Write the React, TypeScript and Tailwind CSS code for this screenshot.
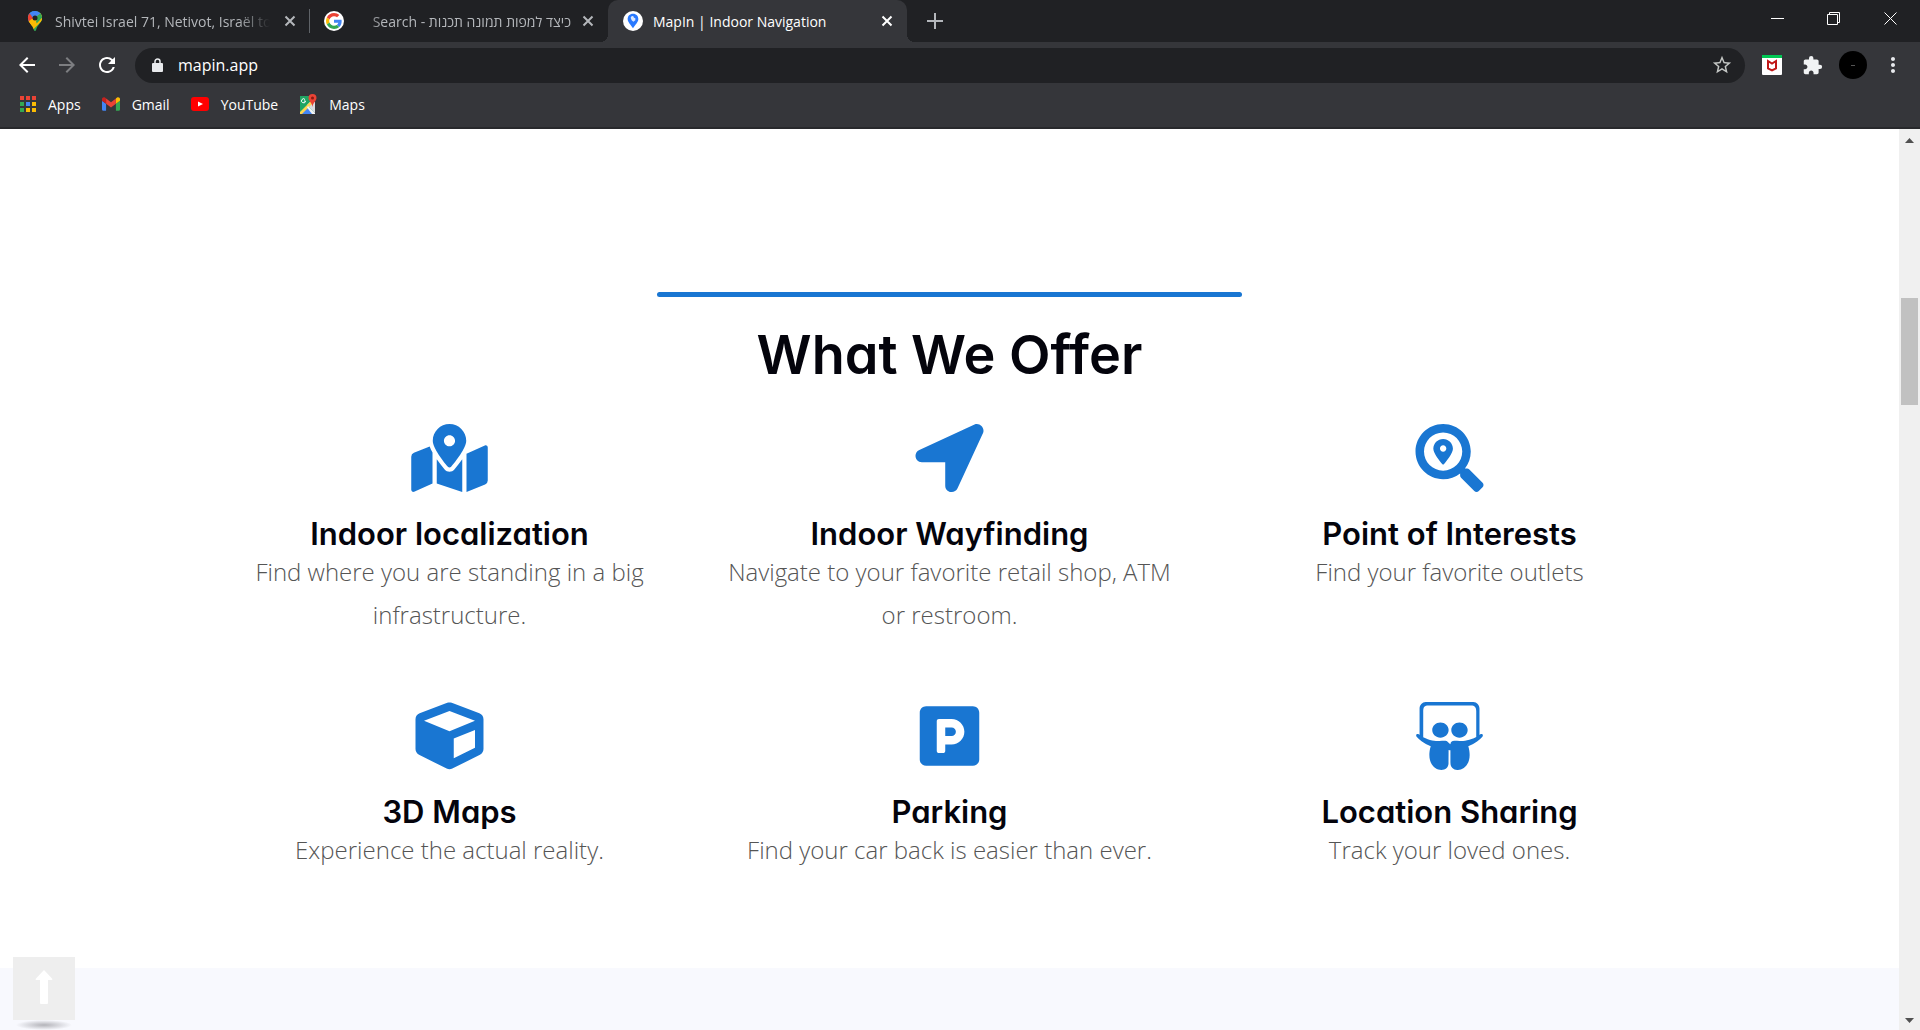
import type { ReactNode } from "react";
import {
  FaCube,
  FaLocationArrow,
  FaMapMarkedAlt,
  FaParking,
  FaSearchLocation,
  FaSlideshare,
} from "react-icons/fa";
import {
  MdArrowBack,
  MdArrowForward,
  MdExtension,
  MdMoreVert,
  MdRefresh,
  MdStarBorder,
} from "react-icons/md";

const PIN = "M12 0C7 0 3.5 3.7 3.5 8.300c0 5.700 5.800 8.200 7.200 14.400.3 1.600 2.300 1.600 2.600 0 1.400-6.200 7.200-8.700 7.200-14.400C20.500 3.700 17 0 12 0z";

function MapsPin() {
  return (
    <svg viewBox="0 0 24 24" className="size-5 shrink-0" aria-hidden="true">
      <clipPath id="pin-clip">
        <path d={PIN} />
      </clipPath>
      <g clipPath="url(#pin-clip)">
        <rect width="24" height="24" fill="#34a853" />
        <path d="M0 20 12 8 24 -4 V8 L8 24z" fill="#fbbc04" />
        <path d="M12 8 24 -3 V5 L20.500 8 14 15z" fill="#34a853" />
        <path d="M0 16 L14 2 V-2 H0z" fill="#1a73e8" />
        <path d="M0 8 L5 2.500 12 9 3 18z" fill="#ea4335" />
        <path d="M5.500 2.500 L9 -1 H24 L10 9z" fill="#4285f4" />
        <path d="M2 14 L9 9 14 11 9 18z" fill="#fbbc04" />
      </g>
      <circle cx="12" cy="8.300" r="3" fill="#202124" />
    </svg>
  );
}

function GoogleMark() {
  return (
    <span className="flex size-5 shrink-0 items-center justify-center rounded-full bg-white">
      <svg viewBox="0 0 48 48" className="size-4" aria-hidden="true">
        <path fill="#EA4335" d="M24 9.500c3.540 0 6.710 1.220 9.210 3.600l6.850-6.850C35.900 2.380 30.470 0 24 0 14.620 0 6.510 5.380 2.560 13.220l7.980 6.190C12.430 13.720 17.740 9.500 24 9.500z" />
        <path fill="#4285F4" d="M46.980 24.550c0-1.570-.15-3.090-.38-4.550H24v9.020h12.940c-.58 2.960-2.260 5.480-4.780 7.180l7.730 6c4.510-4.180 7.090-10.360 7.090-17.650z" />
        <path fill="#FBBC05" d="M10.530 28.590c-.48-1.450-.76-2.990-.76-4.590s.27-3.140.76-4.590l-7.980-6.190C.92 16.460 0 20.120 0 24c0 3.880.92 7.540 2.560 10.780l7.970-6.190z" />
        <path fill="#34A853" d="M24 48c6.480 0 11.930-2.130 15.890-5.810l-7.730-6c-2.150 1.450-4.920 2.300-8.160 2.300-6.260 0-11.570-4.220-13.470-9.910l-7.980 6.190C6.510 42.620 14.620 48 24 48z" />
      </svg>
    </span>
  );
}

function MapInMark() {
  return (
    <span className="flex size-5 shrink-0 items-center justify-center rounded-full bg-white">
      <svg viewBox="0 0 24 24" className="size-4" aria-hidden="true">
        <path d="M12 1C7 1 4 4.600 4 9c0 5 4.500 8 8 14 3.500-6 8-9 8-14 0-4.400-3-8-8-8z" fill="#2979ff" />
        <path d="M8.500 7a3 3 0 0 1 4-2l1 2 2 1v3l-3 2-2.500-2z" fill="#dbe8ff" />
      </svg>
    </span>
  );
}

function CloseGlyph() {
  return (
    <svg viewBox="0 0 12 12" className="size-3" aria-hidden="true">
      <path d="M1.500 1.500l9 9M10.500 1.500l-9 9" stroke="currentColor" strokeWidth="2" />
    </svg>
  );
}

function TabClose({ title }: { title: string }) {
  return (
    <button type="button" aria-label={`Close ${title}`} className="flex size-5 shrink-0 items-center justify-center">
      <CloseGlyph />
    </button>
  );
}

function TabStrip() {
  return (
    <div className="flex h-[42px] bg-[#202124] text-[14px] text-[#b4b7bb]">
      <div className="flex w-[309px] items-center gap-[10px] pr-[9px] pl-[25px]">
        <MapsPin />
        <button
          type="button"
          className="min-w-0 flex-1 text-left whitespace-nowrap [mask-image:linear-gradient(to_left,transparent,black_32px)]"
        >
          Shivtei Israel 71, Netivot, Israël to
        </button>
        <TabClose title="directions" />
      </div>
      <div className="my-[9px] w-px bg-[#5f6368]" />
      <div className="flex w-[298px] items-center gap-[7px] pr-[10px] pl-[14px]">
        <GoogleMark />
        <button
          type="button"
          dir="rtl"
          className="min-w-0 flex-1 text-right whitespace-nowrap [mask-image:linear-gradient(to_right,transparent,black_32px)]"
        >
          כיצד למפות תמונה תכנות - Search
        </button>
        <TabClose title="search" />
      </div>
      <div className="relative flex w-[299px] items-center gap-[10px] rounded-t-[10px] bg-[#35363a] pr-[10px] pl-[15px] text-white">
        <span className="absolute bottom-0 -left-2 size-2 bg-[radial-gradient(circle_at_top_left,transparent_8px,#35363a_8px)]" />
        <span className="absolute -right-2 bottom-0 size-2 bg-[radial-gradient(circle_at_top_right,transparent_8px,#35363a_8px)]" />
        <MapInMark />
        <button type="button" className="min-w-0 flex-1 text-left whitespace-nowrap">
          MapIn | Indoor Navigation
        </button>
        <TabClose title="MapIn" />
      </div>
      <button type="button" aria-label="New tab" className="flex w-14 items-center justify-center">
        <svg viewBox="0 0 16 16" className="size-4" aria-hidden="true">
          <path d="M8 0v16M0 8h16" stroke="currentColor" strokeWidth="2" />
        </svg>
      </button>
      <div className="ml-auto flex h-9 pr-px text-white">
        <button type="button" aria-label="Minimize" className="flex w-14 items-center justify-center">
          <svg viewBox="0 0 13 13" className="size-[13px]" aria-hidden="true">
            <path d="M0 6.500h13" stroke="currentColor" />
          </svg>
        </button>
        <button type="button" aria-label="Restore" className="flex w-14 items-center justify-center">
          <svg viewBox="0 0 13 13" className="size-[13px]" fill="none" stroke="currentColor" aria-hidden="true">
            <path d="M.5 2.500h10v10H.5zM2.500 2.500v-2h10v10h-2" />
          </svg>
        </button>
        <button type="button" aria-label="Close window" className="flex w-[58px] items-center justify-center">
          <svg viewBox="0 0 13 13" className="size-[13px]" stroke="currentColor" aria-hidden="true">
            <path d="M.5.5l12 12M12.500.5l-12 12" />
          </svg>
        </button>
      </div>
    </div>
  );
}

function Toolbar() {
  return (
    <div className="flex h-[46px] items-center bg-[#35363a] pr-[15px] pl-[7px] text-white">
      <button type="button" aria-label="Back" className="flex w-10 justify-center">
        <MdArrowBack className="size-6" />
      </button>
      <button type="button" aria-label="Forward" className="flex w-10 justify-center text-[#7d7e81]">
        <MdArrowForward className="size-6" />
      </button>
      <button type="button" aria-label="Reload" className="flex w-10 justify-center">
        <MdRefresh className="size-6" />
      </button>
      <div className="ml-2 flex h-[35px] flex-1 items-center gap-[15px] rounded-full bg-[#202124] pr-3 pl-[17px]">
        <svg viewBox="0 0 11 14" className="h-[14px] w-[11px]" aria-hidden="true">
          <rect y="5" width="11" height="9" rx="1" fill="#e8eaed" />
          <path d="M3 5V3.500a2.500 2.500 0 0 1 5 0V5" fill="none" stroke="#e8eaed" strokeWidth="1.500" />
        </svg>
        <input
          type="text"
          aria-label="Address"
          defaultValue="mapin.app"
          className="min-w-0 flex-1 bg-transparent text-[16px] outline-none"
        />
        <button type="button" aria-label="Bookmark this page">
          <MdStarBorder className="size-[22px] text-[#c4c7c5]" />
        </button>
      </div>
      <button type="button" aria-label="McAfee" className="ml-[17px]">
        <svg viewBox="0 0 20 20" className="size-5" aria-hidden="true">
          <rect width="20" height="20" rx="1" fill="#fff" />
          <path d="M0 0h20v3H0z" fill="#00c853" />
          <path d="M6 6v7.500l4 2 4-2V6l-4 2.500z" fill="none" stroke="#c01818" strokeWidth="2" />
        </svg>
      </button>
      <button type="button" aria-label="Extensions" className="ml-5">
        <MdExtension className="size-[21px] text-[#f1f3f4]" />
      </button>
      <button
        type="button"
        aria-label="Profile"
        className="ml-4 flex size-7 items-center justify-center rounded-full bg-black"
      >
        <span className="h-px w-1 bg-[#555555]" />
      </button>
      <button type="button" aria-label="Menu" className="ml-[14px]">
        <MdMoreVert className="size-6 text-[#e8eaed]" />
      </button>
    </div>
  );
}

const APP_DOTS = [
  "#ea4335", "#ea4335", "#ea4335",
  "#34a853", "#4285f4", "#fbbc04",
  "#34a853", "#fbbc04", "#fbbc04",
];

function AppsIcon() {
  return (
    <svg viewBox="0 0 16 16" className="size-4" aria-hidden="true">
      {APP_DOTS.map((fill, i) => (
        <rect key={i} x={(i % 3) * 6} y={Math.floor(i / 3) * 6} width="4" height="4" fill={fill} />
      ))}
    </svg>
  );
}

function GmailIcon() {
  return (
    <svg viewBox="52 42 88 66" className="h-[14px] w-[18px]" aria-hidden="true">
      <path fill="#4285f4" d="M58 108h14V74L52 59v43c0 3.320 2.690 6 6 6" />
      <path fill="#34a853" d="M120 108h14c3.320 0 6-2.690 6-6V59l-20 15" />
      <path fill="#fbbc04" d="M120 48v26l20-15v-8c0-7.420-8.470-11.650-14.400-7.200" />
      <path fill="#ea4335" d="M72 74V48l24 18 24-18v26L96 92" />
      <path fill="#c5221f" d="M52 51v8l20 15V48l-5.600-4.200c-5.940-4.450-14.400-.22-14.400 7.200" />
    </svg>
  );
}

function YouTubeIcon() {
  return (
    <svg viewBox="0 0 18 14" className="h-[14px] w-[18px]" aria-hidden="true">
      <rect width="18" height="14" rx="3" fill="#ff0000" />
      <path d="M7 4.500l5 2.500-5 2.500z" fill="#fff" />
    </svg>
  );
}

function MapsIcon() {
  return (
    <svg viewBox="0 0 18 20" className="h-5 w-[18px]" aria-hidden="true">
      <path d="M1 2h14v18H1z" fill="#1fa463" />
      <path d="M16 8v11L8 11l4-4z" fill="#dadce0" />
      <path d="M2 20l7-7.500L15 20z" fill="#4285f4" />
      <path d="M1 18L12 7l2 2L3 20H1z" fill="#ffd54f" />
      <path d="M9 12l7 7v1h-3l-5-6.500z" fill="#f1f3f4" />
      <path d="M6 5.500a2 2 0 1 0 .5 1.500H5" fill="none" stroke="#fff" />
      <path d="M13.500 0A4 4 0 0 0 9.500 4c0 3 3.500 4.500 4 9 .5-4.500 4-6 4-9a4 4 0 0 0-4-4z" fill="#ea4335" />
      <circle cx="13.500" cy="4" r="1.500" fill="#8b1a12" />
    </svg>
  );
}

function Bookmark({ icon, label }: { icon: ReactNode; label: string }) {
  return (
    <a href="#" className="flex items-center gap-3">
      {icon}
      {label}
    </a>
  );
}

function BookmarksBar() {
  return (
    <nav
      aria-label="Bookmarks"
      className="flex h-[41px] items-center gap-[21px] border-b-2 border-[#28292c] bg-[#35363a] pb-[7px] pl-5 text-[14px] text-white"
    >
      <Bookmark icon={<AppsIcon />} label="Apps" />
      <Bookmark icon={<GmailIcon />} label="Gmail" />
      <Bookmark icon={<YouTubeIcon />} label="YouTube" />
      <Bookmark icon={<MapsIcon />} label="Maps" />
    </nav>
  );
}

const OFFERS = [
  { icon: FaMapMarkedAlt, title: "Indoor localization", text: "Find where you are standing in a big infrastructure." },
  { icon: FaLocationArrow, title: "Indoor Wayfinding", text: "Navigate to your favorite retail shop, ATM or restroom." },
  { icon: FaSearchLocation, title: "Point of Interests", text: "Find your favorite outlets" },
  { icon: FaCube, title: "3D Maps", text: "Experience the actual reality." },
  { icon: FaParking, title: "Parking", text: "Find your car back is easier than ever." },
  { icon: FaSlideshare, title: "Location Sharing", text: "Track your loved ones." },
];

function Offers() {
  return (
    <section className="flex flex-col items-center bg-white pt-[163px] pb-[97px] text-[#04040c]">
      <div className="h-[5px] w-full max-w-[585px] rounded-full bg-[#1976d2]" />
      <h2 className="mt-6 font-[Inter,sans-serif] text-[54px] leading-[68px] font-semibold [font-feature-settings:'cv11']">
        What We Offer
      </h2>
      <div className="mt-[35px] grid w-full max-w-[1500px] grid-cols-3 gap-y-[66px]">
        {OFFERS.map(({ icon: Icon, title, text }) => (
          <article key={title} className="flex flex-col items-center px-7 text-center">
            <Icon className="h-[68px] w-[77px] text-[#1976d2]" aria-hidden="true" />
            <h3 className="mt-[26px] font-[Inter,sans-serif] text-[31px] leading-8 font-semibold [font-feature-settings:'cv11']">
              {title}
            </h3>
            <p className="text-[24px] leading-[43px] font-light text-[#555555]">{text}</p>
          </article>
        ))}
      </div>
    </section>
  );
}

function ScrollBar() {
  return (
    <div className="flex w-[21px] shrink-0 flex-col items-center bg-[#f0f0f0] pt-[9px] pb-[7px]" aria-hidden="true">
      <svg viewBox="0 0 9 5" className="h-[5px] w-[9px]">
        <path d="M0 5L4.500 0 9 5z" fill="#505050" />
      </svg>
      <div className="mt-[155px] h-[107px] w-[17px] bg-[#c1c1c1]" />
      <svg viewBox="0 0 9 5" className="mt-auto h-[5px] w-[9px]">
        <path d="M0 0L4.500 5 9 0z" fill="#505050" />
      </svg>
    </div>
  );
}

function BackToTop() {
  return (
    <div className="absolute bottom-0 left-[13px] flex flex-col items-center">
      <button type="button" aria-label="Back to top" className="flex h-[63px] w-[62px] items-center justify-center bg-[#eeeeee] pb-1">
        <svg viewBox="0 0 18 34" className="h-[34px] w-[18px]" aria-hidden="true">
          <path
            d="M9 0l8 8.500c.8.800.3 1.500-.5 1.500H13v23a1 1 0 0 1-1 1H6a1 1 0 0 1-1-1V10H1.500C.7 10 .2 9.300 1 8.500z"
            fill="#fff"
          />
        </svg>
      </button>
      <div className="h-[10px] w-14 bg-[radial-gradient(closest-side,#b3b3b9,transparent)]" />
    </div>
  );
}

export default function App() {
  return (
    <div className="flex h-screen flex-col overflow-hidden font-['Open_Sans','Liberation_Sans',sans-serif]">
      <header>
        <TabStrip />
        <Toolbar />
        <BookmarksBar />
      </header>
      <div className="relative flex min-h-0 flex-1">
        <main className="min-w-0 flex-1 overflow-hidden bg-[#f8f9fe]">
          <Offers />
        </main>
        <ScrollBar />
        <BackToTop />
      </div>
    </div>
  );
}
